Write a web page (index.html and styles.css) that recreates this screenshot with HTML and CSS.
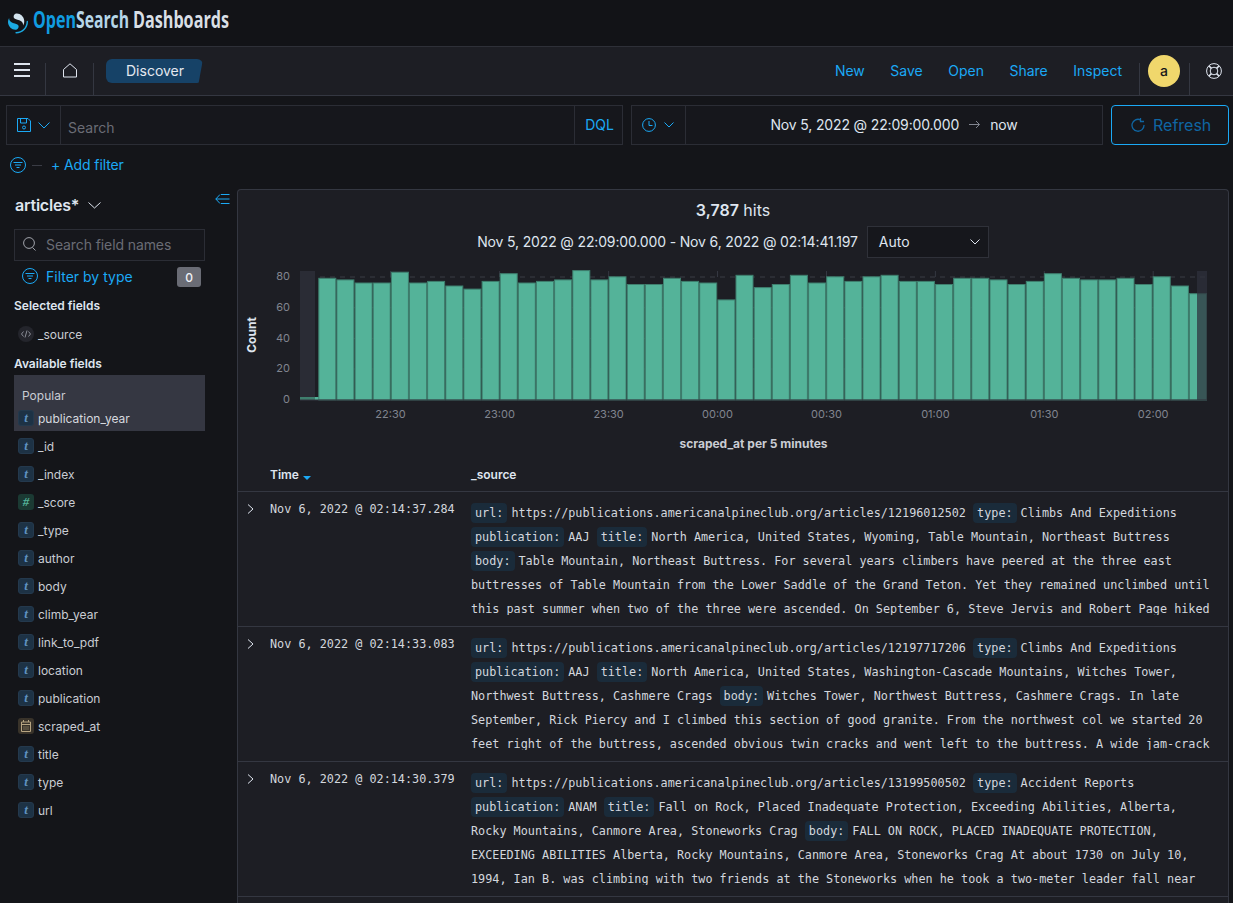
FILE: index.html
```html
<!DOCTYPE html>
<html lang="en">
<head>
  <meta charset="UTF-8" />
  <title>Discover - OpenSearch Dashboards</title>
  <link rel="stylesheet" href="styles.css">
</head>
<body>
  <!-- Top bar with logo -->
  <header class="topbar">
    <svg class="logo-mark" viewBox="0 0 64 64" width="20" height="21">
      <path fill="#1ba9e1" d="M61.7 23.5C60.5 23.5 59.5 24.5 59.5 25.8C59.5 44.4 44.4 59.5 25.8 59.5C24.5 59.5 23.5 60.5 23.5 61.7C23.5 63 24.5 64 25.8 64C46.9 64 64 46.9 64 25.8C64 24.5 63 23.5 61.7 23.5Z"/>
      <path fill="#d3e3ee" d="M48.1 38C50.3 34.5 52.4 29.7 51.9 23.1C51.1 9.4 38.7 -1 26.9 0.1C22.3 0.5 17.6 4.3 18 11C18.2 13.9 19.6 15.6 22 16.9C24.2 18.2 27 19 30.2 19.9C34.1 21 38.6 22.2 42.1 24.8C46.2 27.8 49 31.4 48.1 38Z"/>
      <path fill="#1ba9e1" d="M3.9 14C1.7 17.5 -0.4 22.3 0.1 28.9C0.9 42.6 13.3 53 25.1 51.9C29.7 51.5 34.4 47.7 34 41C33.8 38.1 32.4 36.4 30 35.1C27.8 33.8 25 33 21.8 32.1C17.9 31 13.4 29.8 9.9 27.2C5.8 24.2 3 20.6 3.9 14Z"/>
    </svg>
    <svg class="logo-word" viewBox="0 0 198 30" width="198" height="30">
      <text class="logo-open" x="0" y="22" textLength="43" lengthAdjust="spacingAndGlyphs">Open</text>
      <text class="logo-search" x="43" y="22" textLength="53" lengthAdjust="spacingAndGlyphs">Search</text>
      <text class="logo-dash" x="100" y="22" textLength="96" lengthAdjust="spacingAndGlyphs">Dashboards</text>
    </svg>
  </header>

  <!-- Nav bar -->
  <nav class="navbar">
    <div class="nav-cell nav-menu">
      <svg width="16" height="14" viewBox="0 0 16 14"><path d="M0 1h16M0 7h16M0 13h16" stroke="#dfe5ef" stroke-width="2"/></svg>
    </div>
    <div class="nav-cell nav-home">
      <svg width="14" height="15" viewBox="0 0 14 15"><path d="M.5 6.500L7 .8L13.500 6.500V14H.5Z" fill="none" stroke="#dfe5ef"/></svg>
    </div>
    <div class="crumb">Discover</div>
    <div class="nav-links">
      <a>New</a>
      <a>Save</a>
      <a>Open</a>
      <a>Share</a>
      <a>Inspect</a>
    </div>
    <div class="nav-cell nav-user"><span class="avatar">a</span></div>
    <div class="nav-cell nav-help">
      <svg width="16" height="16" viewBox="0 0 16 16" fill="none" stroke="#dfe5ef">
        <circle cx="8" cy="8" r="7.400"/>
        <circle cx="8" cy="8" r="3.800"/>
        <path d="M2.800 2.800l2.600 2.600M13.200 2.800l-2.600 2.600M2.800 13.200l2.600-2.600M13.200 13.200l-2.600-2.600" stroke-width="1.600"/>
      </svg>
    </div>
  </nav>

  <!-- Query bar -->
  <section class="querybar">
    <div class="query-box">
      <div class="save-btn">
        <svg width="14" height="14" viewBox="0 0 14 14" fill="none" stroke="#1ba9f5"><path d="M.5.500H11L13.500 3V13.500H.500Z"/><path d="M3.500.500V5H9.500V.500"/><circle cx="7" cy="9.500" r="1.500"/></svg>
        <svg width="12" height="7" viewBox="0 0 12 7" fill="none" stroke="#1ba9f5"><path d="M.5.500L6 6L11.500.500"/></svg>
      </div>
      <div class="query-input">Search</div>
      <div class="dql">DQL</div>
    </div>
    <div class="date-box">
      <div class="clock-btn">
        <svg width="14" height="14" viewBox="0 0 14 14" fill="none" stroke="#1ba9f5"><circle cx="7" cy="7" r="6.400"/><path d="M7 3V7.500H10.500"/></svg>
        <svg width="10" height="6" viewBox="0 0 10 6" fill="none" stroke="#1ba9f5"><path d="M.5.500L5 5L9.500.500"/></svg>
      </div>
      <div class="date-range">
        <span>Nov 5, 2022 @ 22:09:00.000</span>
        <svg width="11" height="9" viewBox="0 0 11 9" fill="none" stroke="#81858f"><path d="M0 4.500H10.500M7 1L10.500 4.500L7 8"/></svg>
        <span>now</span>
      </div>
    </div>
    <button class="refresh">
      <svg width="14" height="14" viewBox="0 0 14 14" fill="none" stroke="#0f66a3" stroke-width="1.300"><path d="M9.500 1.800A6 6 0 1 0 13 7"/><path d="M9.500 0V3.500H13"/></svg>
      Refresh
    </button>
  </section>

  <div class="filterbar">
    <svg class="filter-ico" width="16" height="16" viewBox="0 0 16 16" fill="none" stroke="#1ba9f5"><circle cx="8" cy="8" r="7.500"/><path d="M3.500 5.500H12.500M5 8H11M6.500 10.500H9.500"/></svg>
    <span class="filter-dash"></span>
    <a class="add-filter">+ Add filter</a>
  </div>

  <main class="content">
    <!-- Field list -->
    <aside class="sidebar">
      <div class="side-head">
        <div class="index-name">
          articles*
          <svg width="13" height="7" viewBox="0 0 13 7" fill="none" stroke="#dfe5ef"><path d="M.5.500L6.500 6L12.500.500"/></svg>
        </div>
        <svg class="collapse" width="15" height="10" viewBox="0 0 15 10" fill="none" stroke="#1ba9f5"><path d="M5 .5L.8 5L5 9.500M.8 5H14.500M6 .5H14.500M6 9.500H14.500"/></svg>
      </div>
      <div class="field-search">
        <svg width="13" height="14" viewBox="0 0 13 14" fill="none" stroke="#a0a3ab"><circle cx="6" cy="6" r="5.400"/><path d="M9.500 10.500L12.500 13.500"/></svg>
        Search field names
      </div>
      <div class="type-filter">
        <svg width="16" height="16" viewBox="0 0 16 16" fill="none" stroke="#1ba9f5"><circle cx="8" cy="8" r="7.500"/><path d="M3.500 5.500H12.500M5 8H11M6.500 10.500H9.500"/></svg>
        <a>Filter by type</a>
        <span class="count">0</span>
      </div>

      <h3 class="side-title first">Selected fields</h3>
      <div class="field">
        <span class="ficon code"><svg width="10" height="10" viewBox="0 0 10 10" fill="none" stroke="#8a8d96"><path d="M2.500 2.500L.5 5L2.500 7.500M7.500 2.500L9.500 5L7.500 7.500M6 1.500L4 8.500"/></svg></span>
        _source
      </div>

      <h3 class="side-title">Available fields</h3>
      <div class="popular">
        <div class="popular-title">Popular</div>
        <div class="field"><span class="ficon str">t</span>publication_year</div>
      </div>
      <div class="field-list">
        <div class="field"><span class="ficon str">t</span>_id</div>
        <div class="field"><span class="ficon str">t</span>_index</div>
        <div class="field"><span class="ficon num">#</span>_score</div>
        <div class="field"><span class="ficon str">t</span>_type</div>
        <div class="field"><span class="ficon str">t</span>author</div>
        <div class="field"><span class="ficon str">t</span>body</div>
        <div class="field"><span class="ficon str">t</span>climb_year</div>
        <div class="field"><span class="ficon str">t</span>link_to_pdf</div>
        <div class="field"><span class="ficon str">t</span>location</div>
        <div class="field"><span class="ficon str">t</span>publication</div>
        <div class="field">
          <span class="ficon date"><svg width="10" height="12" viewBox="0 0 10 12" fill="none" stroke="#b7a582"><path d="M.5 2H9.500V11.500H.5ZM.5 4.500H9.500M2.500 0V2M7.500 0V2M2.500 7H3.500M4.500 7H5.500M6.500 7H7.500M2.500 9H3.500M4.500 9H5.500M6.500 9H7.500"/></svg></span>
          scraped_at
        </div>
        <div class="field"><span class="ficon str">t</span>title</div>
        <div class="field"><span class="ficon str">t</span>type</div>
        <div class="field"><span class="ficon str">t</span>url</div>
      </div>
    </aside>

    <!-- Results -->
    <section class="panel">
      <div class="hits"><b>3,787</b> hits</div>
      <div class="range-row">
        <span>Nov 5, 2022 @ 22:09:00.000 - Nov 6, 2022 @ 02:14:41.197</span>
        <div class="interval">
          Auto
          <svg width="10" height="6" viewBox="0 0 10 6" fill="none" stroke="#dfe5ef"><path d="M.5.500L5 5L9.500.500"/></svg>
        </div>
      </div>

      <svg class="chart" viewBox="238 262 990 199" width="990" height="199">
        <g class="grid">
          <path d="M300 277H1207M300 307.700H1207M300 338.400H1207M300 369H1207"/>
        </g>
        <path class="ticks" d="M390.500 271V277M499.600 271V277M608.600 271V277M717.500 271V277M826.500 271V277M935.400 271V277M1044.300 271V277M1153.200 271V277"/>
        <rect class="shade-left" x="300" y="271" width="15" height="129"/>
        <g class="bars" transform="translate(0,400) scale(1,-1)">
          <rect x="318.800" height="121.700"/><rect x="336.900" height="120.100"/><rect x="355.100" height="117"/><rect x="373.200" height="117"/>
          <rect x="391.400" height="127.800"/><rect x="409.500" height="117"/><rect x="427.600" height="118.600"/><rect x="445.800" height="114"/>
          <rect x="463.900" height="110.900"/><rect x="482.100" height="118.600"/><rect x="500.200" height="126.300"/><rect x="518.300" height="117"/>
          <rect x="536.500" height="118.600"/><rect x="554.600" height="120.100"/><rect x="572.800" height="129.400"/><rect x="590.900" height="120.100"/>
          <rect x="609" height="123.200"/><rect x="627.200" height="115.500"/><rect x="645.300" height="115.500"/><rect x="663.500" height="121.700"/>
          <rect x="681.600" height="118.600"/><rect x="699.700" height="117"/><rect x="717.900" height="100.100"/><rect x="736" height="124.700"/>
          <rect x="754.200" height="112.400"/><rect x="772.300" height="115.500"/><rect x="790.400" height="124.700"/><rect x="808.600" height="117"/>
          <rect x="826.700" height="123.200"/><rect x="844.900" height="118.600"/><rect x="863" height="123.200"/><rect x="881.100" height="124.700"/>
          <rect x="899.300" height="118.600"/><rect x="917.400" height="118.600"/><rect x="935.600" height="115.500"/><rect x="953.700" height="121.700"/>
          <rect x="971.800" height="121.700"/><rect x="990" height="120.100"/><rect x="1008.100" height="115.500"/><rect x="1026.300" height="118.600"/>
          <rect x="1044.400" height="126.300"/><rect x="1062.500" height="121.700"/><rect x="1080.700" height="120.100"/><rect x="1098.800" height="120.100"/>
          <rect x="1117" height="121.700"/><rect x="1135.100" height="115.500"/><rect x="1153.200" height="123.200"/><rect x="1171.400" height="114"/>
          <rect x="1189.500" height="106.300"/>
        </g>
        <rect class="stub" x="300" y="397" width="15" height="3"/>
        <rect class="stub-end" x="315" y="397" width="3.500" height="3"/>
        <rect class="shade-right" x="1197" y="271" width="10" height="129"/>
        <path class="axis" d="M300 400H1207"/>
        <g class="y-labels">
          <text x="290" y="280">80</text>
          <text x="290" y="311">60</text>
          <text x="290" y="342">40</text>
          <text x="290" y="372">20</text>
          <text x="290" y="403">0</text>
        </g>
        <text class="y-title" transform="translate(256,335) rotate(-90)">Count</text>
        <g class="x-labels">
          <text x="390.500" y="418">22:30</text>
          <text x="499.600" y="418">23:00</text>
          <text x="608.600" y="418">23:30</text>
          <text x="717.500" y="418">00:00</text>
          <text x="826.500" y="418">00:30</text>
          <text x="935.400" y="418">01:00</text>
          <text x="1044.300" y="418">01:30</text>
          <text x="1153.200" y="418">02:00</text>
        </g>
        <text class="x-title" x="753.500" y="448">scraped_at per 5 minutes</text>
      </svg>

      <div class="table-head">
        <span></span>
        <span class="th">Time <i class="sort"></i></span>
        <span class="th">_source</span>
      </div>

      <div class="row">
        <svg class="expand" width="7" height="10" viewBox="0 0 7 10" fill="none" stroke="#dfe5ef"><path d="M1 .5L6 5L1 9.500"/></svg>
        <div class="time">Nov 6, 2022 @ 02:14:37.284</div>
        <div class="source">
          <span class="tag">url:</span><span>https://publications.americanalpineclub.org/articles/12196012502</span>
          <span class="tag">type:</span><span>Climbs And Expeditions</span>
          <span class="tag">publication:</span><span>AAJ</span>
          <span class="tag">title:</span><span>North America, United States, Wyoming, Table Mountain, Northeast Buttress</span>
          <span class="tag">body:</span><span>Table Mountain, Northeast Buttress. For several years climbers have peered at the three east buttresses of Table Mountain from the Lower Saddle of the Grand Teton. Yet they remained unclimbed until this past summer when two of the three were ascended. On September 6, Steve Jervis and Robert Page hiked</span>
        </div>
      </div>

      <div class="row">
        <svg class="expand" width="7" height="10" viewBox="0 0 7 10" fill="none" stroke="#dfe5ef"><path d="M1 .5L6 5L1 9.500"/></svg>
        <div class="time">Nov 6, 2022 @ 02:14:33.083</div>
        <div class="source">
          <span class="tag">url:</span><span>https://publications.americanalpineclub.org/articles/12197717206</span>
          <span class="tag">type:</span><span>Climbs And Expeditions</span>
          <span class="tag">publication:</span><span>AAJ</span>
          <span class="tag">title:</span><span>North America, United States, Washington-Cascade Mountains, Witches Tower, Northwest Buttress, Cashmere Crags</span>
          <span class="tag">body:</span><span>Witches Tower, Northwest Buttress, Cashmere Crags. In late September, Rick Piercy and I climbed this section of good granite. From the northwest col we started 20 feet right of the buttress, ascended obvious twin cracks and went left to the buttress. A wide jam-crack</span>
        </div>
      </div>

      <div class="row">
        <svg class="expand" width="7" height="10" viewBox="0 0 7 10" fill="none" stroke="#dfe5ef"><path d="M1 .5L6 5L1 9.500"/></svg>
        <div class="time">Nov 6, 2022 @ 02:14:30.379</div>
        <div class="source">
          <span class="tag">url:</span><span>https://publications.americanalpineclub.org/articles/13199500502</span>
          <span class="tag">type:</span><span>Accident Reports</span>
          <span class="tag">publication:</span><span>ANAM</span>
          <span class="tag">title:</span><span>Fall on Rock, Placed Inadequate Protection, Exceeding Abilities, Alberta, Rocky Mountains, Canmore Area, Stoneworks Crag</span>
          <span class="tag">body:</span><span>FALL ON ROCK, PLACED INADEQUATE PROTECTION, EXCEEDING ABILITIES Alberta, Rocky Mountains, Canmore Area, Stoneworks Crag At about 1730 on July 10, 1994, Ian B. was climbing with two friends at the Stoneworks when he took a two-meter leader fall near</span>
        </div>
      </div>
    </section>
  </main>
</body>
</html>
```

FILE: styles.css
```css
* { margin: 0; padding: 0; box-sizing: border-box; }

html, body {
  height: 100%;
  overflow: hidden;
}

body {
  font-family: Inter, 'Noto Sans', sans-serif;
  font-size: 14px;
  background: #141519;
  color: #dfe5ef;
  display: flex;
  flex-direction: column;
}

a { color: #1ba9f5; }

/* top bar */
.topbar {
  height: 47px;
  flex: none;
  background: #121317;
  border-bottom: 1px solid #2e3038;
  display: flex;
  align-items: center;
  padding-left: 8px;
}

.logo-word {
  margin-left: 5px;
  margin-top: -4px;
  font-family: 'Open Sans', sans-serif;
  font-weight: 700;
  font-size: 24px;
}

.logo-open { fill: #109ce0; }
.logo-search { fill: #b5d6e8; }
.logo-dash { fill: #d9dfe5; }

/* nav */
.navbar {
  height: 49px;
  flex: none;
  background: #1d1e24;
  border-bottom: 1px solid #343741;
  display: flex;
  align-items: stretch;
}

.nav-cell {
  display: flex;
  align-items: center;
  justify-content: center;
}

.nav-menu { width: 46px; }
.nav-home { width: 48px; }

.nav-menu, .nav-home, .nav-user {
  background: linear-gradient(#343741, #343741) no-repeat right 16px / 1px 100%;
}

.nav-menu svg { margin: -2px 0 0 -3px; }
.nav-home svg { margin: -1px 1px 0 0; }

.crumb {
  margin: 12px 0 0 12px;
  width: 97px;
  height: 24px;
  line-height: 24px;
  padding-left: 20px;
  background: #164267;
  color: #e4e8ef;
  border-radius: 6px;
  clip-path: polygon(0 0, 100% 0, 95.500% 100%, 0 100%);
}

.nav-links {
  margin-left: auto;
  display: flex;
  align-items: center;
  gap: 25.500px;
  padding-right: 17px;
  padding-bottom: 2px;
}

.nav-user {
  width: 51px;
  position: relative;
}

.nav-user::before {
  content: "";
  position: absolute;
  left: 0;
  top: 16px;
  bottom: 0;
  width: 1px;
  background: #343741;
}

.avatar {
  width: 32px;
  height: 32px;
  border-radius: 50%;
  background: #f0d76c;
  color: #15161a;
  display: flex;
  align-items: center;
  justify-content: center;
  font-size: 14px;
  font-weight: 500;
  margin: -1px 1px 0 0;
}

.nav-help { width: 43px; }
.nav-help svg { margin-top: -1px; margin-right: -4px; }

/* query bar */
.querybar {
  flex: none;
  display: flex;
  gap: 8px;
  padding: 9px 4px 0 6px;
}

.query-box, .date-box {
  height: 40px;
  display: flex;
  align-items: stretch;
  background: #16171c;
  border: 1px solid #2b2d35;
}

.query-box { width: 617px; }
.date-box { width: 472px; }

.save-btn {
  width: 54px;
  border-right: 1px solid #2b2d35;
  display: flex;
  align-items: center;
  gap: 7px;
  padding-left: 10px;
}

.query-input {
  flex: 1;
  display: flex;
  align-items: center;
  padding: 5px 0 0 7px;
  color: #6a6c75;
}

.dql {
  width: 48px;
  border-left: 1px solid #2b2d35;
  display: flex;
  align-items: center;
  justify-content: center;
  color: #1ba9f5;
  padding: 0 0 2px 2px;
}

.clock-btn {
  width: 54px;
  border-right: 1px solid #2b2d35;
  display: flex;
  align-items: center;
  gap: 8px;
  padding: 0 0 0 10px;
}

.date-range {
  flex: 1;
  display: flex;
  align-items: center;
  justify-content: center;
  gap: 10px;
  color: #dfe5ef;
  padding-bottom: 2px;
  letter-spacing: -0.150px;
}

.refresh {
  width: 118px;
  height: 40px;
  background: #16171c;
  border: 1px solid #1ba9f5;
  border-radius: 4px;
  color: #0f66a3;
  font-family: inherit;
  font-size: 16px;
  display: flex;
  align-items: center;
  gap: 8px;
  padding-left: 19px;
}

.filterbar {
  flex: none;
  height: 44px;
  display: flex;
  align-items: flex-start;
  padding: 12px 0 0 10px;
}

.filter-dash {
  width: 10px;
  height: 1px;
  background: #3a3c45;
  margin: 8px 0 0 6px;
}

.add-filter {
  margin-left: 9px;
  line-height: 16px;
  letter-spacing: -0.100px;
}

/* layout */
.content {
  flex: 1;
  display: flex;
  min-height: 0;
}

.sidebar {
  width: 237px;
  flex: none;
  padding-left: 14px;
  font-size: 12px;
}

.side-head {
  height: 40px;
  display: flex;
  justify-content: space-between;
  align-items: flex-start;
  padding-right: 7px;
}

.index-name {
  font-size: 16px;
  font-weight: 600;
  color: #dfe5ef;
  margin: 4px 0 0 1px;
  line-height: 24px;
  letter-spacing: -0.200px;
  display: flex;
  align-items: center;
  gap: 9px;
}

.collapse { margin-top: 5px; }

.field-search {
  width: 191px;
  height: 32px;
  background: #16171c;
  border: 1px solid #2b2d35;
  display: flex;
  align-items: center;
  gap: 10px;
  padding: 0 0 2px 8px;
  font-size: 14px;
  letter-spacing: -0.100px;
  color: #6a6c75;
}

.type-filter {
  width: 187px;
  height: 20px;
  margin-top: 5px;
  padding-left: 8px;
  display: flex;
  align-items: center;
  font-size: 14px;
}

.type-filter a { margin-left: 8px; }

.count {
  margin-left: auto;
  width: 24px;
  height: 20px;
  margin-top: 2px;
  background: #6a6c75;
  border-radius: 3px;
  color: #f0f2f5;
  font-size: 12px;
  font-weight: 500;
  display: flex;
  align-items: center;
  justify-content: center;
}

.side-title {
  font-size: 12px;
  font-weight: 600;
  line-height: 16px;
  color: #dfe5ef;
  margin: 8px 0 3px;
}

.side-title.first { margin: 12px 0 6px; }

.field {
  height: 28px;
  display: flex;
  align-items: center;
  gap: 4px;
  padding-left: 4px;
  color: #c9ccd3;
  width: 191px;
}

.ficon {
  width: 16px;
  height: 16px;
  border-radius: 3px;
  display: flex;
  align-items: center;
  justify-content: center;
  flex: none;
  font-family: 'Liberation Serif', serif;
  font-weight: 700;
  font-style: italic;
  font-size: 13px;
}

.ficon.str { background: #1d3245; color: #6092c0; border: 1px solid #24394d; }
.ficon.num { background: #1b3a33; color: #54b399; }
.ficon.date { background: #39332a; }
.ficon.code { background: #24252c; border-radius: 50%; }

.popular {
  width: 191px;
  height: 56px;
  background: #353742;
  padding-top: 13px;
}

.popular-title {
  padding-left: 8px;
  line-height: 16px;
  color: #c9ccd3;
}

.popular .field { color: #d6d9df; }

.field-list { margin-top: 1px; }

/* results panel */
.panel {
  width: 992px;
  flex: none;
  background: #1d1e24;
  border: 1px solid #343741;
  border-bottom: 0;
  border-radius: 4px 4px 0 0;
  overflow: hidden;
}

.hits {
  margin-top: 10px;
  height: 20px;
  line-height: 20px;
  text-align: center;
  font-size: 16px;
  color: #dfe5ef;
}

.hits b { font-weight: 600; }

.range-row {
  margin-top: 6px;
  display: flex;
  align-items: center;
  justify-content: center;
  gap: 9px;
  color: #dfe5ef;
}

.range-row span {
  letter-spacing: -0.150px;
  margin-top: -2px;
}

.interval {
  width: 122px;
  height: 32px;
  background: #16171c;
  border: 1px solid #2f3139;
  display: flex;
  align-items: center;
  justify-content: space-between;
  padding: 0 8px 1px 11px;
}

/* chart */
.chart {
  display: block;
  margin-top: 4px;
  font-family: Inter, sans-serif;
}

.grid path {
  stroke: #3a3c45;
  stroke-dasharray: 5 5;
  fill: none;
}

.ticks { stroke: #343741; fill: none; }
.shade-left { fill: #2a2c35; }
.shade-right { fill: rgba(46, 48, 59, 0.72); }
.axis { stroke: #343741; fill: none; }

.bars rect {
  width: 17px;
  fill: #54b399;
  stroke: #3f7f6e;
  stroke-width: 1;
}

.stub { fill: #3f7f6e; }
.stub-end { fill: #54b399; }

.y-labels text {
  fill: #81858f;
  font-size: 11px;
  text-anchor: end;
}

.x-labels text {
  fill: #81858f;
  font-size: 11px;
  text-anchor: middle;
}

.y-title {
  fill: #dfe5ef;
  font-size: 12px;
  font-weight: 700;
  text-anchor: middle;
}

.x-title {
  fill: #c9ccd3;
  font-size: 12px;
  font-weight: 700;
  text-anchor: middle;
}

/* table */
.table-head {
  height: 31px;
  padding-bottom: 3px;
  display: grid;
  grid-template-columns: 32px 201px 1fr;
  align-items: center;
  border-bottom: 1px solid #343741;
}

.th {
  font-size: 12px;
  font-weight: 600;
  color: #dfe5ef;
}

.sort {
  display: inline-block;
  border: 4px solid transparent;
  border-top-color: #1ba9f5;
  border-bottom: 0;
  margin-left: 1px;
  vertical-align: -1px;
}

.row {
  height: 135px;
  display: grid;
  grid-template-columns: 32px 201px 745px;
  align-items: start;
  padding-top: 9px;
  border-bottom: 1px solid #343741;
  font-family: 'DejaVu Sans Mono', monospace;
  font-size: 11.800px;
  color: #d3d7de;
}

.expand { margin: 3px 0 0 9px; }

.time { line-height: 16px; }

.source {
  line-height: 24px;
  max-height: 114px;
  overflow: hidden;
}

.tag {
  background: #1a2b3a;
  padding: 3px 4px;
  border-radius: 4px;
  margin-right: 4px;
}
```
